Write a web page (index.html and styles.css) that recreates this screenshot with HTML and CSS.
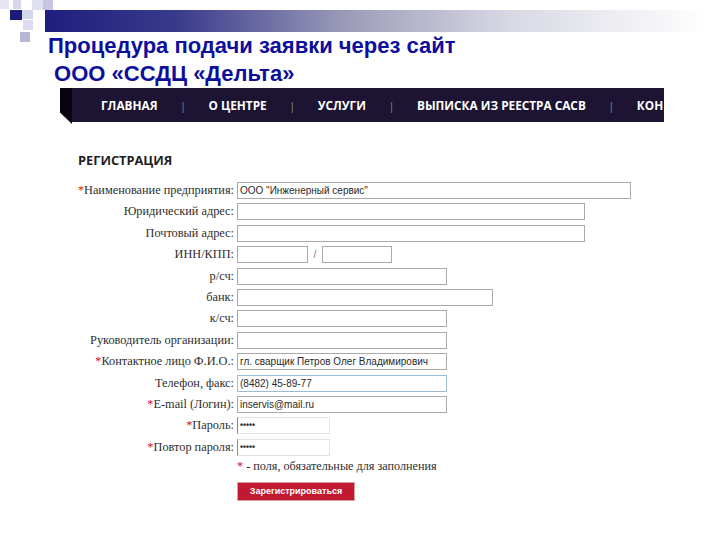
FILE: index.html
```html
<!DOCTYPE html>
<html lang="ru">
<head>
<meta charset="utf-8">
<title>Процедура подачи заявки</title>
<link rel="stylesheet" href="styles.css">
</head>
<body>
<header class="slide-head">
  <div class="deco">
    <span class="sq sq1"></span>
    <span class="sq sq2"></span>
    <span class="sq sq3"></span>
    <span class="sq sq4"></span>
    <span class="sq sq5"></span>
    <span class="sq sq6"></span>
    <span class="sq sq7"></span>
    <span class="sq sq8"></span>
  </div>
  <div class="bar"></div>
  <h1 class="title">Процедура подачи заявки через сайт<br>&nbsp;ООО «ССДЦ «Дельта»</h1>
</header>

<section class="shot">
  <nav class="menu">
    <div class="fold"></div>
    <div class="menu-bar">
      <span class="item">ГЛАВНАЯ</span><span class="sep">|</span>
      <span class="item">О ЦЕНТРЕ</span><span class="sep">|</span>
      <span class="item">УСЛУГИ</span><span class="sep">|</span>
      <span class="item">ВЫПИСКА ИЗ РЕЕСТРА САСВ</span><span class="sep">|</span>
      <span class="item">КОН</span>
    </div>
  </nav>

  <h2 class="reg-title">РЕГИСТРАЦИЯ</h2>

  <form class="reg">
    <label class="lbl"><span class="req">*</span>Наименование предприятия:</label>
    <div class="fld"><span class="inp w394">ООО "Инженерный сервис"</span></div>

    <label class="lbl">Юридический адрес:</label>
    <div class="fld"><span class="inp w348"></span></div>

    <label class="lbl">Почтовый адрес:</label>
    <div class="fld"><span class="inp w348"></span></div>

    <label class="lbl">ИНН/КПП:</label>
    <div class="fld"><span class="inp w71"></span><span class="slash">/</span><span class="inp w70"></span></div>

    <label class="lbl">р/сч:</label>
    <div class="fld"><span class="inp w210"></span></div>

    <label class="lbl">банк:</label>
    <div class="fld"><span class="inp w256"></span></div>

    <label class="lbl">к/сч:</label>
    <div class="fld"><span class="inp w210"></span></div>

    <label class="lbl">Руководитель организации:</label>
    <div class="fld"><span class="inp w210"></span></div>

    <label class="lbl"><span class="req">*</span>Контактное лицо Ф.И.О.:</label>
    <div class="fld"><span class="inp w210">гл. сварщик Петров Олег Владимирович</span></div>

    <label class="lbl">Телефон, факс:</label>
    <div class="fld"><span class="inp w210 focus">(8482) 45-89-77</span></div>

    <label class="lbl"><span class="req">*</span>E-mail (Логин):</label>
    <div class="fld"><span class="inp w210">inservis@mail.ru</span></div>

    <label class="lbl"><span class="req">*</span>Пароль:</label>
    <div class="fld"><span class="inp w93 pass">•••••</span></div>

    <label class="lbl"><span class="req">*</span>Повтор пароля:</label>
    <div class="fld"><span class="inp w93 pass">•••••</span></div>

    <span class="empty"></span>
    <div class="note"><span class="req">*</span> - поля, обязательные для заполнения</div>

    <span class="empty"></span>
    <div class="fld btn-row"><span class="btn">Зарегистрироваться</span></div>
  </form>
</section>
</body>
</html>
```

FILE: styles.css
```css
html, body {
  margin: 0;
  padding: 0;
  background: #ffffff;
}

body {
  width: 720px;
  height: 540px;
  overflow: hidden;
  font-family: "Liberation Sans", Arial, sans-serif;
}

.slide-head {
  position: relative;
  padding-top: 10px;
}

.deco {
  position: absolute;
  left: 0;
  top: 0;
  width: 60px;
  height: 45px;
}

.sq {
  position: absolute;
  display: block;
}

.sq1 { left: 0;  top: 0;  width: 9px;  height: 9px;  background: #e6e6f2; }
.sq2 { left: 13px; top: 0; width: 8px; height: 9px; background: #d6d6ea; }
.sq3 { left: 10px; top: 10px; width: 12px; height: 10px; background: #1c1c78; }
.sq4 { left: 22px; top: 10px; width: 11px; height: 9px; background: #d4d4ea; }
.sq5 { left: 32px; top: 0;  width: 11px; height: 10px; background: #e0e0f0; }
.sq6 { left: 43px; top: 0;  width: 10px; height: 10px; background: #c6c6e0; }
.sq7 { left: 23px; top: 20px; width: 10px; height: 10px; background: #dcdcee; }
.sq8 { left: 20px; top: 32px; width: 10px; height: 10px; background: #b8b8d4; }

.bar {
  margin-left: 45px;
  width: 662px;
  height: 22px;
  background: linear-gradient(to right, #1e1e7e 0%, #3a3a8c 20%, #9a9ab8 45%, #d8d8e4 70%, #ffffff 100%);
}

.title {
  margin: 0 0 0 48px;
  font-family: "Liberation Sans", Arial, sans-serif;
  font-weight: bold;
  font-size: 22px;
  line-height: 28px;
  color: #0e0e9c;
}

.shot {
  position: relative;
}

.menu {
  display: flex;
  margin-left: 60px;
  width: 604px;
  height: 36px;
}

.fold {
  flex: none;
  width: 12px;
  height: 36px;
  background: #07040f;
  clip-path: polygon(0 0, 100% 0, 100% 100%, 0 68%);
}

.menu-bar {
  flex: 1;
  min-width: 0;
  height: 34px;
  background: #1c1432;
  display: flex;
  align-items: center;
  gap: 22px;
  padding-left: 29px;
  overflow: hidden;
  white-space: nowrap;
  font-family: "Open Sans", "Noto Sans", sans-serif;
  font-weight: bold;
  font-size: 11.8px;
  color: #ffffff;
}

.item {
  flex: none;
}

.sep {
  flex: none;
  width: 7px;
  text-align: center;
  color: #8a8494;
  font-weight: normal;
  font-size: 11px;
}

.reg-title {
  margin: 28px 0 0 78px;
  font-family: "Open Sans", "Noto Sans", sans-serif;
  font-weight: bold;
  font-size: 12.8px;
  line-height: 17px;
  color: #1e1e1e;
}

.reg {
  display: grid;
  grid-template-columns: 234px auto;
  column-gap: 3px;
  row-gap: 4.4px;
  margin-top: 13px;
  align-items: center;
}

.lbl {
  text-align: right;
  font-family: "Liberation Serif", "Times New Roman", serif;
  font-size: 12.3px;
  color: #2e2e2e;
  white-space: nowrap;
  line-height: 17px;
}

.req {
  color: #d01010;
}

.fld {
  display: flex;
  align-items: center;
  height: 17px;
}

.inp {
  box-sizing: border-box;
  display: block;
  height: 17px;
  border: 1px solid #a9a9a9;
  background: #ffffff;
  padding: 0 2px;
  font-family: "Liberation Sans", Arial, sans-serif;
  font-size: 10px;
  line-height: 15px;
  color: #2a2a2a;
  white-space: nowrap;
  overflow: hidden;
}

.w394 { width: 394px; }
.w348 { width: 348px; }
.w256 { width: 256px; }
.w210 { width: 210px; }
.w93  { width: 93px; }
.w71  { width: 71px; }
.w70  { width: 70px; }

.focus {
  border-color: #9dbcd6;
}

.pass {
  border-color: #e2e2e2;
  border-left-color: #8a8a8a;
  font-size: 8.5px;
  letter-spacing: 0;
  line-height: 15px;
  font-weight: bold;
}

.slash {
  width: 14px;
  text-align: center;
  font-size: 10px;
  color: #777777;
}

.note {
  font-family: "Liberation Serif", "Times New Roman", serif;
  font-size: 12.2px;
  line-height: 12px;
  color: #2e2e2e;
  white-space: nowrap;
}

.btn-row {
  margin-top: 6px;
  height: 19px;
}

.btn {
  box-sizing: border-box;
  display: block;
  width: 118px;
  height: 19px;
  background: #c11a30;
  border: 1px solid #d9a0a8;
  color: #ffffff;
  font-family: "Liberation Sans", Arial, sans-serif;
  font-weight: bold;
  font-size: 9px;
  line-height: 17px;
  text-align: center;
}
```
